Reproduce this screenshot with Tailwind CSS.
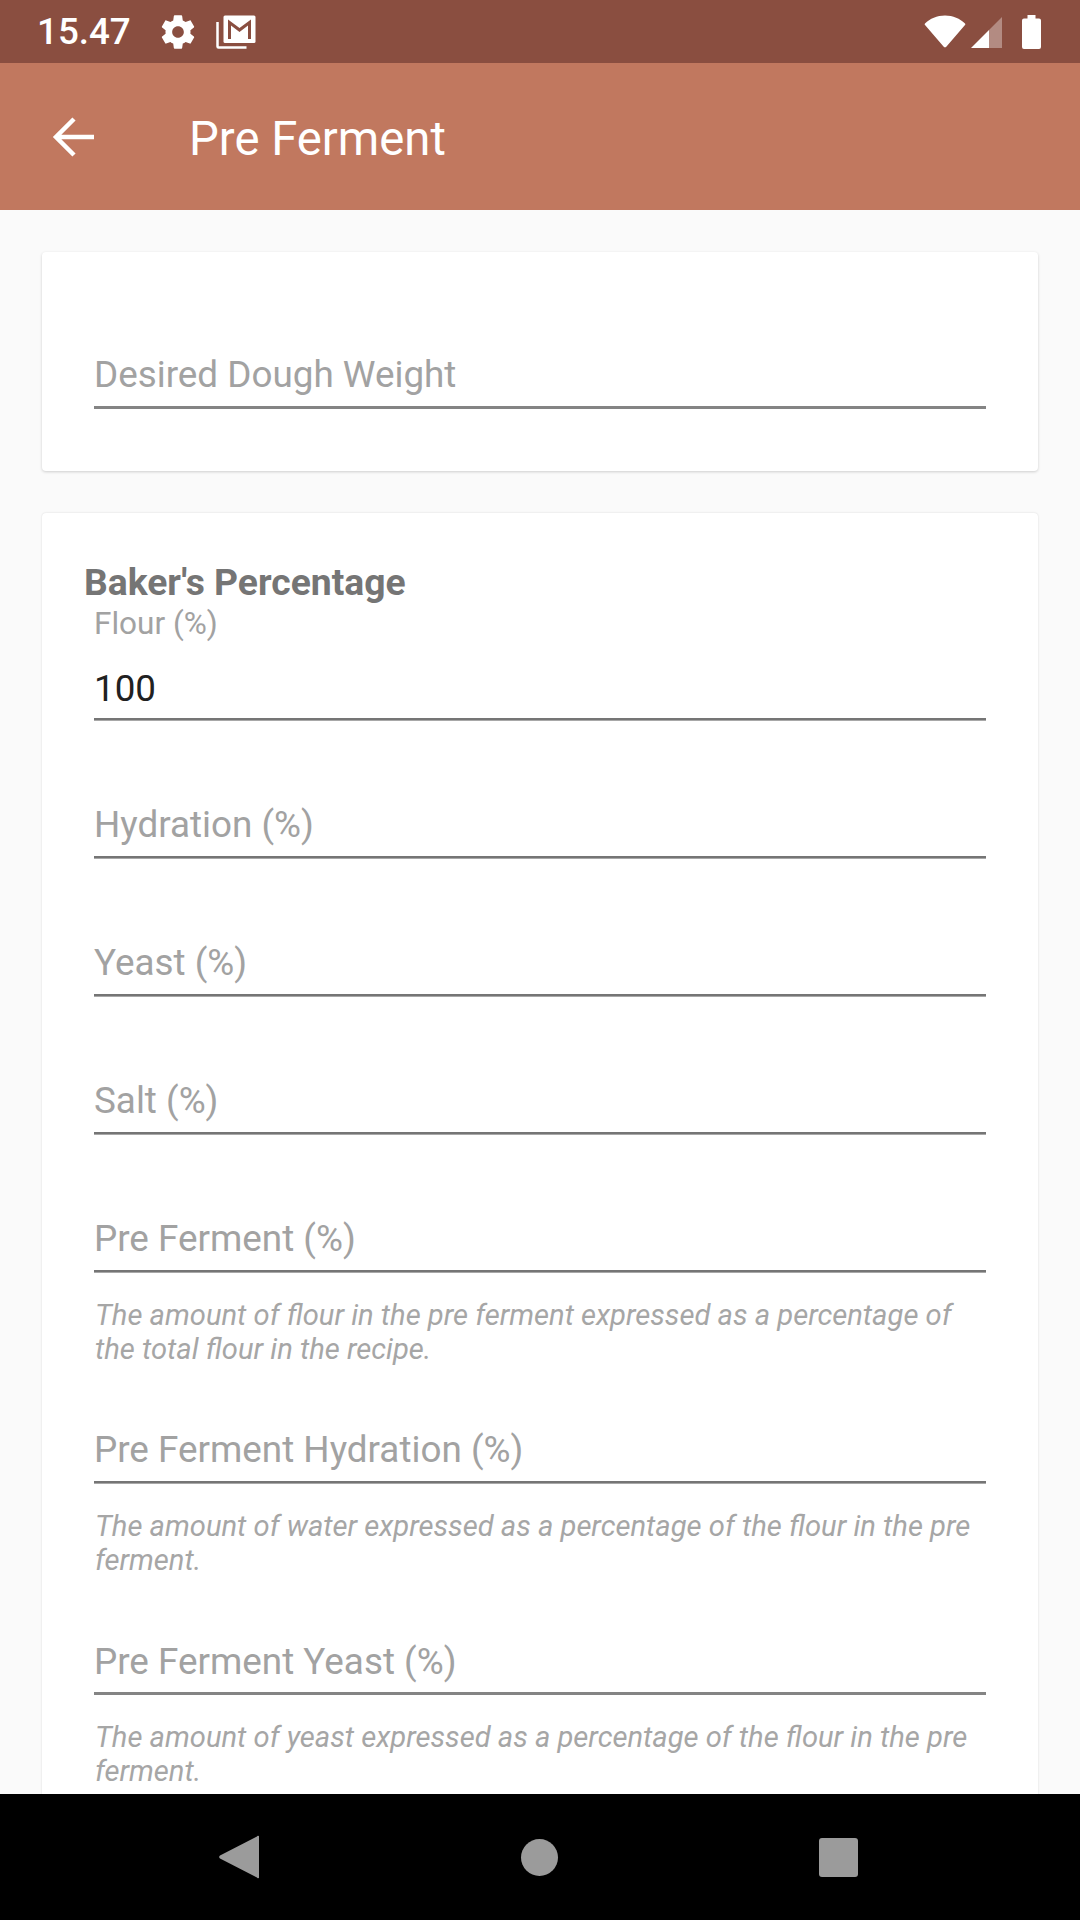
<!DOCTYPE html>
<html lang="en">
  <head>
    <meta charset="UTF-8" />
    <meta name="viewport" content="width=device-width, initial-scale=1.0" />
    <title>Pre Ferment</title>
    <script src="https://cdn.jsdelivr.net/npm/@tailwindcss/browser@4"></script>
  </head>

  <body class="bg-[#fafafa] font-['Roboto',sans-serif]">
    <div class="w-[1080px] h-[1920px] flex flex-col overflow-hidden">
      <!-- status bar -->
      <div class="h-[63px] shrink-0 bg-[#8a4e40] flex items-center text-white pl-[37px] pr-[39px]">
        <span class="w-[94px] pt-[2px] text-[36.75px] font-medium leading-none">15.47</span>
        <svg class="ml-[27px] w-[40px] h-[40px]" viewBox="0 0 24 24" fill="#fff">
          <path d="M19.43 12.98c.04-.32.07-.64.07-.98s-.03-.66-.07-.98l2.11-1.65c.19-.15.24-.42.12-.64l-2-3.46c-.12-.22-.39-.3-.61-.22l-2.49 1c-.52-.4-1.08-.73-1.69-.98l-.38-2.65C14.46 2.18 14.25 2 14 2h-4c-.25 0-.46.18-.49.42l-.38 2.65c-.61.25-1.17.59-1.69.98l-2.49-1c-.23-.09-.49 0-.61.22l-2 3.46c-.13.22-.07.49.12.64l2.11 1.65c-.04.32-.07.65-.07.98s.03.66.07.98l-2.11 1.65c-.19.15-.24.42-.12.64l2 3.46c.12.22.39.3.61.22l2.49-1c.52.4 1.08.73 1.69.98l.38 2.65c.03.24.24.42.49.42h4c.25 0 .46-.18.49-.42l.38-2.65c.61-.25 1.17-.59 1.69-.98l2.49 1c.23.09.49 0 .61-.22l2-3.46c.12-.22.07-.49-.12-.64l-2.11-1.65zM12 15.5c-1.93 0-3.5-1.57-3.5-3.5s1.57-3.5 3.5-3.5 3.5 1.57 3.5 3.5-1.57 3.5-3.5 3.5z" />
        </svg>
        <svg class="ml-[18px] w-[40px] h-[34px]" viewBox="0 0 40 34" fill="none">
          <path d="M1.500 7v24.500a1 1 0 0 0 1 1h28" stroke="#fff" stroke-width="2.500" />
          <rect x="7.500" y="0.500" width="32" height="27.500" rx="1.500" fill="#fff" />
          <path d="M12 24V4.500l11.500 8.500L35 4.500V24h-3V10.500l-8.500 6.500-8.500-6.500V24z" fill="#8a4e40" />
        </svg>
        <div class="flex-1"></div>
        <svg class="w-[42px] h-[34px]" viewBox="0 0 42 34" fill="#fff">
          <path d="M1 8.500C6 3.500 13 .5 21 .5s15 3 20 8a1 1 0 0 1 0 1.500L22.500 31.500a2 2 0 0 1-3 0L1 10a1 1 0 0 1 0-1.500z" />
        </svg>
        <svg class="ml-[5px] w-[32px] h-[34px]" viewBox="0 0 32 34">
          <path d="M18 15 31 2v31H18z" fill="#fff" fill-opacity="0.35" />
          <path d="M0 33 18 15v18z" fill="#fff" />
        </svg>
        <svg class="ml-[19px] w-[19px] h-[34px]" viewBox="0 0 19 34" fill="#fff">
          <path d="M5.500 0h8v3.500H17a2 2 0 0 1 2 2V32a2 2 0 0 1-2 2H2a2 2 0 0 1-2-2V5.500a2 2 0 0 1 2-2h3.500z" />
        </svg>
      </div>

      <!-- toolbar -->
      <div class="h-[147px] shrink-0 bg-[#c1785f] flex items-center text-white">
        <svg class="ml-[52px] w-[42px] h-[42px]" viewBox="0 0 42 42" fill="none" stroke="#fff" stroke-width="4.500">
          <path d="M42 21H4M22 3 4 21l18 18" />
        </svg>
        <h1 class="ml-[95px] pt-[7px] text-[47.25px] leading-none">Pre Ferment</h1>
      </div>

      <!-- content -->
      <div class="flex-1 overflow-hidden px-[42px] pt-[42px]">
        <div class="h-[219px] bg-white rounded-[4px] shadow-[0_1px_3px_rgba(0,0,0,0.18)] px-[52px] pt-[100px]">
          <div class="h-[57px] border-b-[3px] border-[#848484] text-[#a2a2a2] text-[36.85px] leading-[46px]">Desired Dough Weight</div>
        </div>

        <div class="mt-[42px] h-[1400px] bg-white rounded-[4px] shadow-[0_0_2px_rgba(0,0,0,0.15)] px-[52px] pt-[48px]">
          <h2 class="-ml-[10px] text-[#757575] text-[37.25px] font-bold leading-[43px]">Baker's Percentage</h2>
          <div class="text-[#a2a2a2] text-[31.5px] leading-[40px]">Flour (%)</div>
          <div class="mt-[25px] h-[51px] border-b-2 border-[#757575] shadow-[0_1px_0_#a8a8a8] text-[#212121] text-[36.75px] leading-[40px]">100</div>

          <div class="mt-[81px] h-[57px] border-b-2 border-[#757575] shadow-[0_1px_0_#a8a8a8] text-[#a2a2a2] text-[36.85px] leading-[48px]">Hydration (%)</div>
          <div class="mt-[81px] h-[57px] border-b-2 border-[#757575] shadow-[0_1px_0_#a8a8a8] text-[#a2a2a2] text-[36.85px] leading-[48px]">Yeast (%)</div>
          <div class="mt-[81px] h-[57px] border-b-2 border-[#757575] shadow-[0_1px_0_#a8a8a8] text-[#a2a2a2] text-[36.85px] leading-[48px]">Salt (%)</div>

          <div class="mt-[81px] h-[57px] border-b-2 border-[#757575] shadow-[0_1px_0_#a8a8a8] text-[#a2a2a2] text-[36.85px] leading-[48px]">Pre Ferment (%)</div>
          <p class="mt-[26px] ml-[1px] text-[#a6a6a6] text-[29.16px] italic leading-[34px]">The amount of flour in the pre ferment expressed as a percentage of the total flour in the recipe.</p>

          <div class="mt-[60px] h-[57px] border-b-2 border-[#757575] shadow-[0_1px_0_#a8a8a8] text-[#a2a2a2] text-[36.85px] leading-[48px]">Pre Ferment Hydration (%)</div>
          <p class="mt-[26px] ml-[1px] text-[#a6a6a6] text-[29.16px] italic leading-[34px]">The amount of water expressed as a percentage of the flour in the pre ferment.</p>

          <div class="mt-[61px] h-[57px] border-b-[3px] border-[#848484] text-[#a2a2a2] text-[36.85px] leading-[48px]">Pre Ferment Yeast (%)</div>
          <p class="mt-[25px] ml-[1px] text-[#a6a6a6] text-[29.16px] italic leading-[34px]">The amount of yeast expressed as a percentage of the flour in the pre ferment.</p>
        </div>
      </div>

      <!-- nav bar -->
      <div class="h-[126px] shrink-0 bg-black flex items-center">
        <svg class="ml-[219px] w-[40px] h-[44px]" viewBox="0 0 40 44" fill="#9b9b9b">
          <path d="M38 1.500a1 1 0 0 1 2 .5v40a1 1 0 0 1-2 .5L1 23.500a2 2 0 0 1 0-3z" />
        </svg>
        <div class="ml-[262px] w-[37px] h-[37px] rounded-full bg-[#9b9b9b]"></div>
        <div class="ml-[261px] w-[39px] h-[39px] rounded-[3px] bg-[#9b9b9b]"></div>
      </div>
    </div>
  </body>
</html>
